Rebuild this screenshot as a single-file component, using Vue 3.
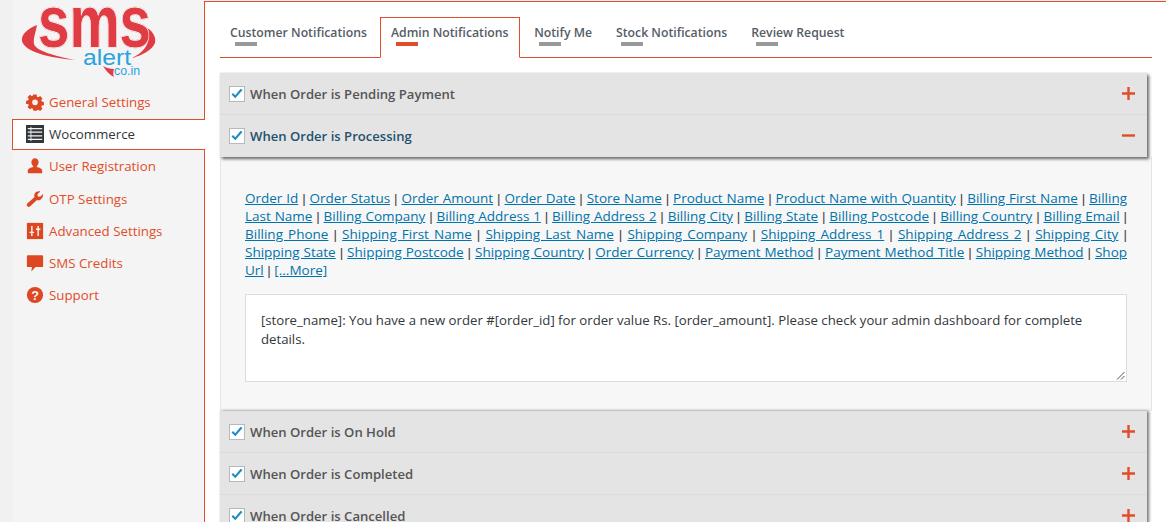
<script setup>
const menu = [
  { label: 'General Settings', icon: 'gear' },
  { label: 'Wocommerce', icon: 'list', active: true },
  { label: 'User Registration', icon: 'user' },
  { label: 'OTP Settings', icon: 'wrench' },
  { label: 'Advanced Settings', icon: 'sliders' },
  { label: 'SMS Credits', icon: 'chat' },
  { label: 'Support', icon: 'help' },
]
const tabs = ['Customer Notifications', 'Admin Notifications', 'Notify Me', 'Stock Notifications', 'Review Request']
const links = ['Order Id', 'Order Status', 'Order Amount', 'Order Date', 'Store Name', 'Product Name', 'Product Name with Quantity', 'Billing First Name', 'Billing Last Name', 'Billing Company', 'Billing Address 1', 'Billing Address 2', 'Billing City', 'Billing State', 'Billing Postcode', 'Billing Country', 'Billing Email', 'Billing Phone', 'Shipping First Name', 'Shipping Last Name', 'Shipping Company', 'Shipping Address 1', 'Shipping Address 2', 'Shipping City', 'Shipping State', 'Shipping Postcode', 'Shipping Country', 'Order Currency', 'Payment Method', 'Payment Method Title', 'Shipping Method', 'Shop Url', '[...More]']
</script>

<template>
  <div class="page">
    <aside class="side">
      <div class="logo">
        <svg width="150" height="86" viewBox="13 0 150 86">
          <path d="M37 25C27 29 21 35 22 41c2 10 26 17 53 19-20-4-39-9-41-16-1-6 2-12 3-19z" fill="#e03c44"/>
          <path d="M147 28c7 4 9 10 8 15-3 7-12 12-23 15 9-4 15-11 16-17 1-5 0-9-1-13z" fill="#e03c44"/>
          <text x="38" y="47" class="logo-sms" textLength="113" lengthAdjust="spacingAndGlyphs">sms</text>
          <text x="83" y="65" class="logo-alert" textLength="48" lengthAdjust="spacingAndGlyphs">alert</text>
          <text x="114" y="75" class="logo-co" textLength="26" lengthAdjust="spacingAndGlyphs">co.in</text>
          <path d="M103 66c3 2 7 3 11 3-1 3-1 6 0 8-4-2-8-6-11-11z" fill="#e03c44"/>
        </svg>
      </div>
      <ul class="menu">
        <li v-for="m in menu" :key="m.label" :class="{ active: m.active }">
          <svg class="ico" width="18" height="18" viewBox="0 0 20 20">
            <path v-if="m.icon === 'gear'" fill-rule="evenodd" d="M8 1h4l.5 2.600 1.600.7 2.200-1.500 2.900 2.900-1.500 2.200.7 1.600 2.600.5v4l-2.600.5-.7 1.600 1.500 2.200-2.900 2.900-2.200-1.500-1.600.7L12 21H8l-.5-2.600-1.600-.7-2.200 1.500-2.900-2.900 1.500-2.200-.7-1.600L-1 12.500v-4l2.600-.5.7-1.600L.8 4.200l2.900-2.900 2.200 1.500 1.600-.7zM10 7a3.500 3.500 0 1 0 0 7 3.500 3.500 0 0 0 0-7z" transform="translate(1 .9) scale(.9)"/>
            <g v-else-if="m.icon === 'list'">
              <rect x="0" y="0" width="20" height="20" fill="#32373c"/>
              <path d="M2 4h16M2 8h16M2 12h16M2 16h16" stroke="#f4f4f4" stroke-width="1.300"/>
              <path d="M5.500 2v16" stroke="#f4f4f4" stroke-width="1"/>
            </g>
            <path v-else-if="m.icon === 'user'" d="M10 1.500a4 4 0 0 1 4 4.200c0 2-1.100 3.500-2 4.300v1c2.500.6 6 1.500 6 4.500V18H2v-2.500c0-3 3.500-3.900 6-4.500v-1c-.9-.8-2-2.300-2-4.300a4 4 0 0 1 4-4.200z"/>
            <path v-else-if="m.icon === 'wrench'" d="M19 4.500l-3.300 3-2.500-.4-.5-2.400 3.200-3.100c-2.400-.7-5 .2-6.200 2.300-.7 1.400-.6 2.800-.2 3.900L1.500 15c-.9.900-.9 2.300 0 3.100.9.900 2.200.9 3.100 0L12.200 11c1.200.4 2.700.4 3.900-.3 2.200-1.200 3.100-3.800 2.900-6.200z"/>
            <g v-else-if="m.icon === 'sliders'">
              <rect x="1" y="1" width="18" height="18"/>
              <path d="M6.500 4.500v11M13.500 4.500v11M4 11.500h5M11 8h5" stroke="#f4f4f4" stroke-width="1.600" fill="none"/>
            </g>
            <path v-else-if="m.icon === 'chat'" d="M2 1.500h16a1 1 0 0 1 1 1v11a1 1 0 0 1-1 1h-7.500L6 19.500l.5-5H2a1 1 0 0 1-1-1v-11a1 1 0 0 1 1-1z"/>
            <g v-else>
              <circle cx="10" cy="10" r="9"/>
              <text x="10" y="15" class="help">?</text>
            </g>
          </svg>
          <span>{{ m.label }}</span>
        </li>
      </ul>
    </aside>

    <main class="main">
      <nav class="tabs">
        <div v-for="t in tabs" :key="t" class="tab" :class="{ current: t === 'Admin Notifications' }">
          <span>{{ t }}</span>
          <i></i>
        </div>
      </nav>

      <section class="acc">
        <div class="head">
          <span class="check"><svg width="14" height="14" viewBox="0 0 14 14"><path d="M1.500 7.500l3.800 3.800L12.500 3l-1.800-1.200-5.500 6.500L3 6z"/></svg></span>
          <b>When Order is Pending Payment</b>
          <svg class="pm" width="13" height="13" viewBox="0 0 13 13"><path d="M0 6.500h13M6.500 0v13"/></svg>
        </div>
        <div class="head open last">
          <span class="check"><svg width="14" height="14" viewBox="0 0 14 14"><path d="M1.500 7.500l3.800 3.800L12.500 3l-1.800-1.200-5.500 6.500L3 6z"/></svg></span>
          <b>When Order is Processing</b>
          <svg class="pm" width="13" height="13" viewBox="0 0 13 13"><path d="M0 6.500h13"/></svg>
        </div>
      </section>

      <div class="body">
        <p class="links">
          <template v-for="(l, i) in links" :key="l">
            <a>{{ l }}</a>{{ ' ' }}<span v-if="i < links.length - 1" class="sep">|</span>{{ ' ' }}
          </template>
        </p>
        <div class="box">[store_name]: You have a new order #[order_id] for order value Rs. [order_amount]. Please check your admin dashboard for complete details.
          <svg class="grip" width="9" height="9" viewBox="0 0 9 9"><path d="M8.500 1L1 8.500M8.500 5L5 8.500" stroke="#555" fill="none"/></svg>
        </div>
      </div>

      <section class="acc flat">
        <div class="head" v-for="t in ['On Hold', 'Completed', 'Cancelled']" :key="t">
          <span class="check"><svg width="14" height="14" viewBox="0 0 14 14"><path d="M1.500 7.500l3.800 3.800L12.500 3l-1.800-1.200-5.500 6.500L3 6z"/></svg></span>
          <b>When Order is {{ t }}</b>
          <svg class="pm" width="13" height="13" viewBox="0 0 13 13"><path d="M0 6.500h13M6.500 0v13"/></svg>
        </div>
      </section>
    </main>
  </div>
</template>

<style>
html, body {
  margin: 0;
  height: 100%;
  overflow: hidden;
  background: #f1f1f1;
}
</style>

<style scoped>
.page {
  display: flex;
  height: 522px;
  overflow: hidden;
  padding-left: 13px;
  font-family: "Open Sans", sans-serif;
  font-size: 13.2px;
  box-sizing: border-box;
}
.side {
  width: 191px;
  flex: none;
  background: #f4f4f4;
}
.logo {
  height: 86px;
}
.logo svg {
  display: block;
}
.logo-sms {
  font: 700 74px "Liberation Sans", sans-serif;
  fill: #e03c44;
  stroke: #fff;
  stroke-width: 1.5px;
  paint-order: stroke;
  filter: drop-shadow(0 0 .6px #e8666c);
}
.logo-alert {
  font: 400 22px "Liberation Sans", sans-serif;
  fill: #29a3df;
}
.logo-co {
  font: 400 12px "Liberation Sans", sans-serif;
  fill: #29a3df;
}
.menu {
  list-style: none;
  margin: 0;
  padding: 0;
}
.menu li {
  display: flex;
  align-items: center;
  gap: 5px;
  height: 32.2px;
  padding-left: 13px;
  color: #e14d2a;
  box-sizing: border-box;
  font-size: 13.3px;
}
.menu li.active {
  position: relative;
  margin-top: 1px;
  margin-left: -1px;
  height: 31.2px;
  padding-bottom: 1px;
  width: 193px;
  background: #fff;
  border: 1px solid #e14d2a;
  border-right: 0;
  color: #32373c;
  z-index: 1;
}
.ico {
  fill: #dd4722;
  flex: none;
}
.help {
  font: 700 14px "Liberation Sans", sans-serif;
  fill: #f4f4f4;
  text-anchor: middle;
}
.main {
  flex: 1;
  min-width: 0;
  background: #fff;
  border-left: 1px solid #e14d2a;
  border-top: 1px solid #e14d2a;
  margin-top: 1px;
  padding: 15px 14px 0 15px;
}
.tabs {
  display: flex;
  height: 40px;
  border-bottom: 1px solid #e14d2a;
  margin-bottom: 15px;
}
.tab {
  position: relative;
  padding: 7px 14px 0 10px;
  font-weight: 600;
  color: #555d66;
  font-size: 12.25px;
  box-sizing: border-box;
  height: 41px;
}
.tab i {
  position: absolute;
  left: 15px;
  top: 25px;
  width: 22px;
  height: 4px;
  background: #999;
}
.tab.current {
  border: 1px solid #e14d2a;
  border-bottom-color: #fff;
  padding: 6px 10px 0 10px;
  margin-left: -1px;
  margin-right: 4.6px;
}
.tab.current i {
  background: #e14d2a;
  top: 24px;
}
.acc {
  background: #e4e4e4;
  margin-right: 5px;
  box-shadow: 2px 2px 3px #666, 0 0 1px #ccc;
  position: relative;
}
.acc.flat {
  box-shadow: 2px 0 3px #777, 0 0 1px #ccc;
}
.head {
  position: relative;
  display: flex;
  align-items: center;
  height: 42px;
  padding-left: 9px;
  gap: 5px;
  border-bottom: 1px solid #dbdbdb;
  box-sizing: border-box;
  color: #555;
  font-size: 13.1px;
}
.head b {
  font-weight: 600;
}
.head.open {
  color: #23506e;
}
.head.last {
  border-bottom: 0;
}
.check {
  width: 14px;
  height: 14px;
  border: 1px solid #b4b9be;
  background: #fff;
  display: block;
  flex: none;
}
.check svg {
  display: block;
  fill: #1e8cbe;
}
.pm {
  position: absolute;
  right: 12px;
  top: 14px;
  stroke: #e14d2a;
  stroke-width: 2.4;
  fill: none;
}
.body {
  background: #f7f7f7;
  padding: 32px 24px 30px 24px;
  border-left: 1px solid #e5e5e5;
  border-right: 1px solid #e5e5e5;
  height: 254px;
  box-sizing: border-box;
}
.links {
  margin: 0 0 15px;
  line-height: 18px;
  color: #444;
  font-size: 13.5px;
  text-align: justify;
}
.links a {
  color: #0073aa;
  text-decoration: underline;
}
.sep {
  font-family: "Liberation Sans", sans-serif;
  line-height: 1;
}
.box {
  position: relative;
  height: 88px;
  box-sizing: border-box;
  background: #fff;
  border: 1px solid #ddd;
  padding: 16px 15px;
  color: #32373c;
  line-height: 19px;
}
.grip {
  position: absolute;
  right: 1px;
  bottom: 1px;
}
</style>
